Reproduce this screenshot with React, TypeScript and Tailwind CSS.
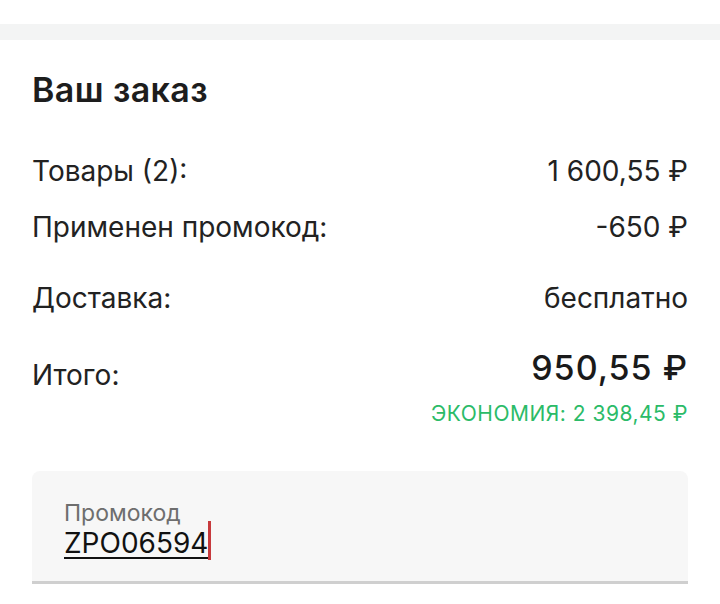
export default function App() {
  const rows = [
    { label: 'Товары (2):', value: '1 600,55 ₽', cls: 'h-[56px]' },
    { label: 'Применен промокод:', value: '-650 ₽', cls: 'h-[71px]' },
    { label: 'Доставка:', value: 'бесплатно', cls: 'h-[67px]' },
  ]

  return (
    <div className="w-[720px] h-[604px] bg-white overflow-hidden font-['Inter','Noto_Sans',sans-serif] text-[#222]">
      <div className="h-6" />
      <div className="h-4 bg-[#f3f4f4]" />
      <div className="px-8 pt-[30px]">
        <h2 className="text-[34px] leading-[40px] font-semibold tracking-[0.4px] text-[#1d1d1d]">Ваш заказ</h2>

        <div className="mt-[44px]">
          {rows.map((r) => (
            <div key={r.label} className={`flex justify-between items-start text-[28px] leading-[34px] ${r.cls}`}>
              <span>{r.label}</span>
              <span>{r.value}</span>
            </div>
          ))}
          <div className="flex justify-between items-start h-[40px]">
            <span className="text-[28px] leading-[34px] mt-[10px]">Итого:</span>
            <span className="text-[34px] leading-[40px] font-medium tracking-[1px] text-[#1a1a1a]">950,55 ₽</span>
          </div>
          <div className="text-right text-[21px] leading-[26px] tracking-[0.5px] text-[#2bbb68] mt-[13px]">
            ЭКОНОМИЯ: 2 398,45 ₽
          </div>
        </div>

        <div className="mt-[44px] bg-[#f7f7f7] rounded-t-lg border-b-[3px] border-[#cfcfcf] h-[113px] px-8 pt-[29px]">
          <div className="text-[23px] leading-[27px] text-[#6e6e6e]">Промокод</div>
          <div className="flex items-start">
            <span className="text-[28px] leading-[32px] text-[#111] underline underline-offset-[4px] decoration-[2px]">ZPO06594</span>
            <span className="w-[3px] shrink-0 h-[39px] bg-[#c73a3d] -mt-[6px]" />
          </div>
        </div>
      </div>
    </div>
  )
}
